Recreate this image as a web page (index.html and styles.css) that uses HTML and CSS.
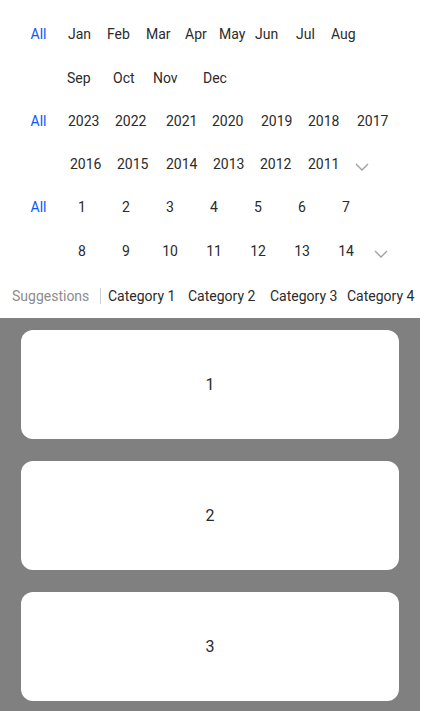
FILE: index.html
```html
<!DOCTYPE html>
<html>
<head>
<meta charset="utf-8">
<link rel="stylesheet" href="styles.css">
</head>
<body>
<div class="filters">
  <div class="row h44">
    <div class="lead"><span class="all">All</span></div>
    <div class="cells m1"><span>Jan</span><span>Feb</span><span>Mar</span><span>Apr</span><span>May</span><span>Jun</span><span>Jul</span><span>Aug</span></div>
  </div>
  <div class="row h43">
    <div class="lead"></div>
    <div class="cells m2"><span>Sep</span><span>Oct</span><span>Nov</span><span>Dec</span></div>
  </div>
  <div class="row h44">
    <div class="lead"><span class="all">All</span></div>
    <div class="cells y1"><span>2023</span><span>2022</span><span>2021</span><span>2020</span><span>2019</span><span>2018</span><span>2017</span></div>
  </div>
  <div class="row h42">
    <div class="lead"></div>
    <div class="cells y2"><span>2016</span><span>2015</span><span>2014</span><span>2013</span><span>2012</span><span>2011</span>
      <svg class="chev" width="14" height="8" viewBox="0 0 14 8"><path d="M1 1 L7 7 L13 1" fill="none" stroke="#a0a0a0" stroke-width="1.4"/></svg>
    </div>
  </div>
  <div class="row h44">
    <div class="lead"><span class="all">All</span></div>
    <div class="cells d1"><span>1</span><span>2</span><span>3</span><span>4</span><span>5</span><span>6</span><span>7</span></div>
  </div>
  <div class="row h44">
    <div class="lead"></div>
    <div class="cells d2"><span>8</span><span>9</span><span>10</span><span>11</span><span>12</span><span>13</span><span>14</span>
      <svg class="chev" width="14" height="8" viewBox="0 0 14 8"><path d="M1 1 L7 7 L13 1" fill="none" stroke="#a0a0a0" stroke-width="1.4"/></svg>
    </div>
  </div>
  <div class="row h45 sugg-row">
    <span class="sugg">Suggestions</span>
    <span class="divider"></span>
    <div class="cells cats"><span>Category 1</span><span>Category 2</span><span>Category 3</span><span>Category 4</span></div>
  </div>
</div>
<div class="list">
  <div class="card">1</div>
  <div class="card">2</div>
  <div class="card">3</div>
</div>
</body>
</html>
```
FILE: styles.css
```css
html, body {
  margin: 0;
  padding: 0;
  background: #ffffff;
  overflow: hidden;
}
body {
  font-family: Roboto, "Noto Sans", Arial, sans-serif;
  font-size: 14px;
  color: #2b2b2b;
  width: 425px;
}
.filters {
  padding-top: 12px;
  width: 425px;
}
.row {
  display: flex;
  align-items: center;
}
.h44 { height: 44px; }
.h43 { height: 43px; }
.h42 { height: 42px; }
.h45 { height: 45px; }
.lead {
  width: 60px;
  flex: none;
  display: flex;
  justify-content: center;
  padding-left: 17px;
  box-sizing: border-box;
}
.all {
  color: #0a59f7;
  padding: 2px 5px;
}
.cells {
  display: grid;
  align-items: center;
  white-space: nowrap;
}
.m1 {
  padding-left: 8px;
  grid-template-columns: 39px 39px 39px 34px 36px 41px 35px auto;
}
.m2 {
  padding-left: 7px;
  grid-template-columns: 46px 40px 50px auto;
}
.y1 {
  padding-left: 8px;
  grid-template-columns: 47px 51px 46px 49px 47px 49px auto;
}
.y2 {
  padding-left: 10px;
  grid-template-columns: 47px 49px 47px 47px 48px 47px auto;
}
.d1, .d2 {
  grid-template-columns: repeat(7, 44px) auto;
  text-align: center;
}
.chev {
  display: block;
  margin-top: 6px;
}
.d2 .chev {
  margin-left: 6px;
}
.sugg-row {
  padding-left: 12px;
}
.sugg {
  color: #8c8c8c;
  width: 88px;
  flex: none;
}
.divider {
  width: 1px;
  height: 16px;
  background: #d0d0d0;
  flex: none;
}
.cats {
  padding-left: 7px;
  grid-template-columns: 80px 82px 77px auto;
}
.list {
  width: 420px;
  height: 393px;
  background: #808080;
  box-sizing: border-box;
  padding: 12px 21px;
  display: flex;
  flex-direction: column;
  gap: 22px;
}
.card {
  height: 109px;
  flex: none;
  background: #ffffff;
  border-radius: 12px;
  display: flex;
  align-items: center;
  justify-content: center;
  font-size: 16px;
  color: #2b2b2b;
}
```
